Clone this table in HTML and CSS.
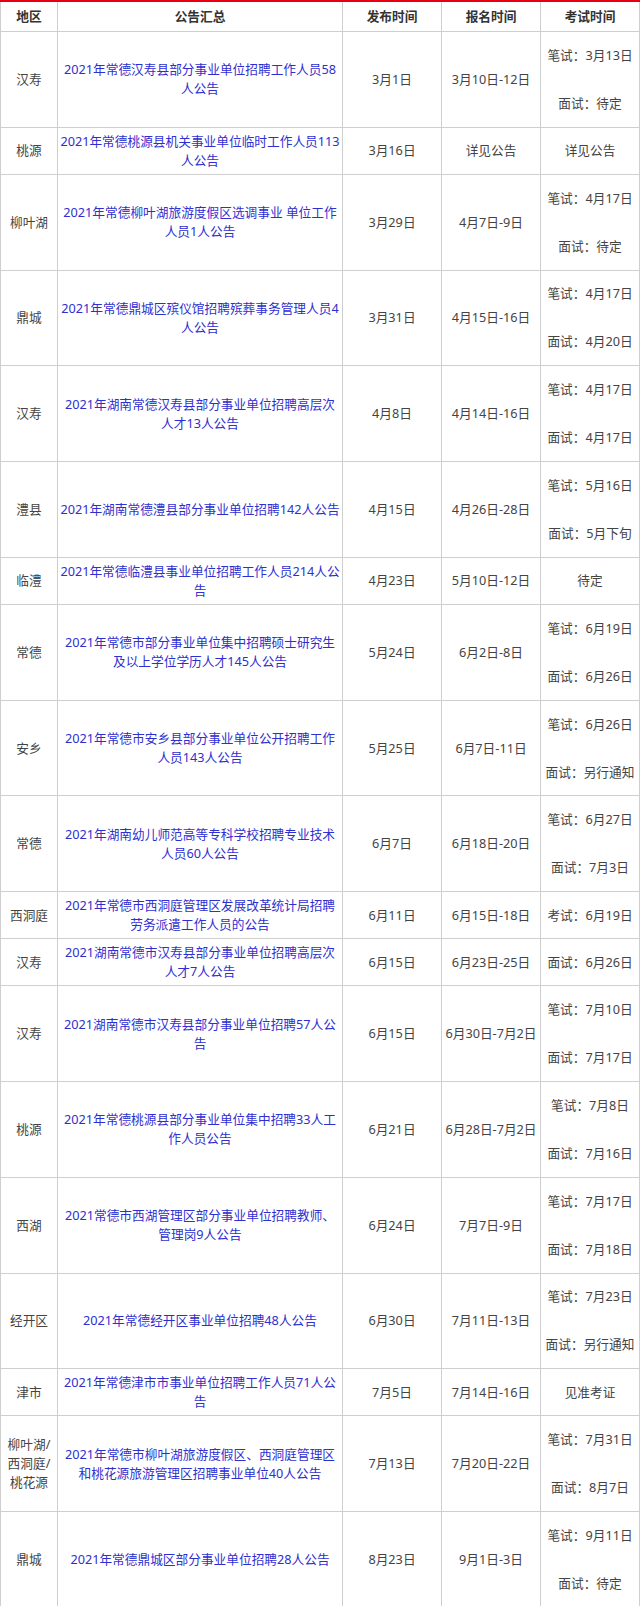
FILE: index.html
```html
<!DOCTYPE html>
<html lang="zh-CN">
<head>
<meta charset="utf-8">
<title>2021年常德事业单位招聘公告汇总</title>
<link rel="stylesheet" href="styles.css">
</head>
<body>
<table class="schedule">
  <colgroup>
    <col class="c-area">
    <col class="c-title">
    <col class="c-date">
    <col class="c-date">
    <col class="c-exam">
  </colgroup>
  <thead>
    <tr><th>地区</th><th>公告汇总</th><th>发布时间</th><th>报名时间</th><th>考试时间</th></tr>
  </thead>
  <tbody>
    <tr><td>汉寿</td><td class="title"><a href="#">2021年常德汉寿县部分事业单位招聘工作人员58人公告</a></td><td>3月1日</td><td>3月10日-12日</td><td><div class="exam"><span>笔试：3月13日</span><span>面试：待定</span></div></td></tr>
    <tr><td>桃源</td><td class="title"><a href="#">2021年常德桃源县机关事业单位临时工作人员113人公告</a></td><td>3月16日</td><td>详见公告</td><td>详见公告</td></tr>
    <tr><td>柳叶湖</td><td class="title"><a href="#">2021年常德柳叶湖旅游度假区选调事业 单位工作人员1人公告</a></td><td>3月29日</td><td>4月7日-9日</td><td><div class="exam"><span>笔试：4月17日</span><span>面试：待定</span></div></td></tr>
    <tr><td>鼎城</td><td class="title"><a href="#">2021年常德鼎城区殡仪馆招聘殡葬事务管理人员4人公告</a></td><td>3月31日</td><td>4月15日-16日</td><td><div class="exam"><span>笔试：4月17日</span><span>面试：4月20日</span></div></td></tr>
    <tr><td>汉寿</td><td class="title"><a href="#">2021年湖南常德汉寿县部分事业单位招聘高层次人才13人公告</a></td><td>4月8日</td><td>4月14日-16日</td><td><div class="exam"><span>笔试：4月17日</span><span>面试：4月17日</span></div></td></tr>
    <tr><td>澧县</td><td class="title"><a href="#">2021年湖南常德澧县部分事业单位招聘142人公告</a></td><td>4月15日</td><td>4月26日-28日</td><td><div class="exam"><span>笔试：5月16日</span><span>面试：5月下旬</span></div></td></tr>
    <tr><td>临澧</td><td class="title"><a href="#">2021年常德临澧县事业单位招聘工作人员214人公告</a></td><td>4月23日</td><td>5月10日-12日</td><td>待定</td></tr>
    <tr><td>常德</td><td class="title"><a href="#">2021年常德市部分事业单位集中招聘硕士研究生及以上学位学历人才145人公告</a></td><td>5月24日</td><td>6月2日-8日</td><td><div class="exam"><span>笔试：6月19日</span><span>面试：6月26日</span></div></td></tr>
    <tr><td>安乡</td><td class="title"><a href="#">2021年常德市安乡县部分事业单位公开招聘工作人员143人公告</a></td><td>5月25日</td><td>6月7日-11日</td><td><div class="exam"><span>笔试：6月26日</span><span>面试：另行通知</span></div></td></tr>
    <tr><td>常德</td><td class="title"><a href="#">2021年湖南幼儿师范高等专科学校招聘专业技术人员60人公告</a></td><td>6月7日</td><td>6月18日-20日</td><td><div class="exam"><span>笔试：6月27日</span><span>面试：7月3日</span></div></td></tr>
    <tr><td>西洞庭</td><td class="title"><a href="#">2021年常德市西洞庭管理区发展改革统计局招聘劳务派遣工作人员的公告</a></td><td>6月11日</td><td>6月15日-18日</td><td>考试：6月19日</td></tr>
    <tr><td>汉寿</td><td class="title"><a href="#">2021湖南常德市汉寿县部分事业单位招聘高层次人才7人公告</a></td><td>6月15日</td><td>6月23日-25日</td><td>面试：6月26日</td></tr>
    <tr><td>汉寿</td><td class="title"><a href="#">2021湖南常德市汉寿县部分事业单位招聘57人公告</a></td><td>6月15日</td><td>6月30日-7月2日</td><td><div class="exam"><span>笔试：7月10日</span><span>面试：7月17日</span></div></td></tr>
    <tr><td>桃源</td><td class="title"><a href="#">2021年常德桃源县部分事业单位集中招聘33人工作人员公告</a></td><td>6月21日</td><td>6月28日-7月2日</td><td><div class="exam"><span>笔试：7月8日</span><span>面试：7月16日</span></div></td></tr>
    <tr><td>西湖</td><td class="title"><a href="#">2021常德市西湖管理区部分事业单位招聘教师、管理岗9人公告</a></td><td>6月24日</td><td>7月7日-9日</td><td><div class="exam"><span>笔试：7月17日</span><span>面试：7月18日</span></div></td></tr>
    <tr><td>经开区</td><td class="title"><a href="#">2021年常德经开区事业单位招聘48人公告</a></td><td>6月30日</td><td>7月11日-13日</td><td><div class="exam"><span>笔试：7月23日</span><span>面试：另行通知</span></div></td></tr>
    <tr><td>津市</td><td class="title"><a href="#">2021年常德津市市事业单位招聘工作人员71人公告</a></td><td>7月5日</td><td>7月14日-16日</td><td>见准考证</td></tr>
    <tr><td>柳叶湖/<br>西洞庭/<br>桃花源</td><td class="title"><a href="#">2021年常德市柳叶湖旅游度假区、西洞庭管理区和桃花源旅游管理区招聘事业单位40人公告</a></td><td>7月13日</td><td>7月20日-22日</td><td><div class="exam"><span>笔试：7月31日</span><span>面试：8月7日</span></div></td></tr>
    <tr><td>鼎城</td><td class="title"><a href="#">2021年常德鼎城区部分事业单位招聘28人公告</a></td><td>8月23日</td><td>9月1日-3日</td><td><div class="exam"><span>笔试：9月11日</span><span>面试：待定</span></div></td></tr>
  </tbody>
</table>
</body>
</html>
```

FILE: styles.css
```css
html, body {
  margin: 0;
  padding: 0;
  background: #fff;
}

body {
  font-family: "Noto Sans", "Noto Sans CJK SC", sans-serif;
  font-size: 12.7px;
  line-height: 19px;
  color: #444;
}

.schedule {
  table-layout: fixed;
  width: 639px;
  border-collapse: collapse;
  border-top: 2px solid #e60012;
}

.c-area { width: 57px; }
.c-title { width: 285px; }
.c-date { width: 99px; }
.c-exam { width: 99px; }

.schedule th,
.schedule td {
  border: 1px solid #cfcfcf;
  text-align: center;
  vertical-align: middle;
  padding: 4px 2px;
}

.schedule td.title {
  padding-left: 1.5px;
  padding-right: 1.5px;
}

.schedule th {
  font-weight: bold;
  color: #333;
  padding: 5px 2px 5px;
}

.schedule a {
  color: #2f2fd0;
  text-decoration: none;
}

.exam {
  display: flex;
  flex-direction: column;
  align-items: center;
  gap: 29px;
  padding: 9.9px 0;
}
```
